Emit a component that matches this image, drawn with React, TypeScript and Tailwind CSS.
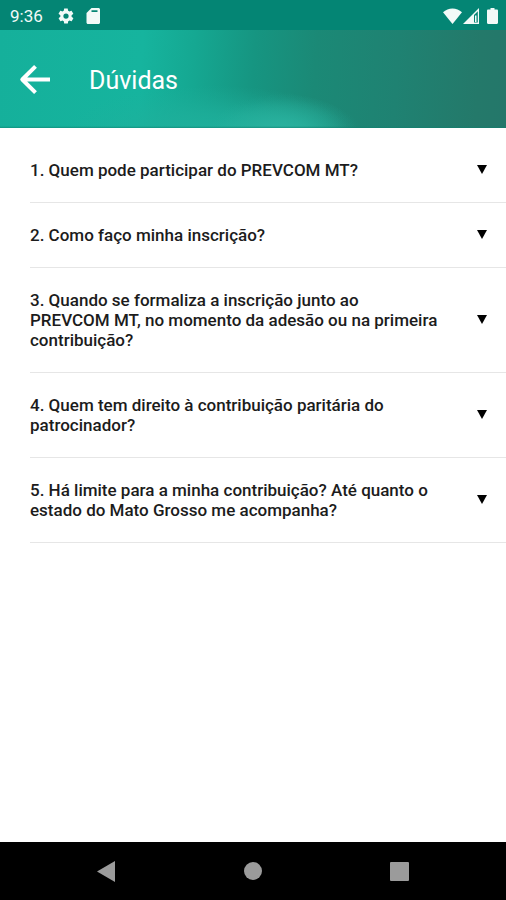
import { useState } from "react";

interface Question {
  id: number;
  title: string;
}

const questions: Question[] = [
  { id: 1, title: "Quem pode participar do PREVCOM MT?" },
  { id: 2, title: "Como faço minha inscrição?" },
  {
    id: 3,
    title:
      "Quando se formaliza a inscrição junto ao PREVCOM MT, no momento da adesão ou na primeira contribuição?",
  },
  {
    id: 4,
    title: "Quem tem direito à contribuição paritária do patrocinador?",
  },
  {
    id: 5,
    title:
      "Há limite para a minha contribuição? Até quanto o estado do Mato Grosso me acompanha?",
  },
];

function StatusBar() {
  return (
    <div className="flex h-[30px] items-center justify-between bg-[#048574] pl-[10px] pr-2 pt-[2px] text-[#f2faf8]">
      <div className="flex items-center">
        <span className="text-[17px] leading-5">9:36</span>
        <svg className="ml-[14px] size-[18px]" viewBox="0 0 24 24" fill="currentColor">
          <path
            fillRule="evenodd"
            d="M19.4 13c0-.3.1-.6.1-1s0-.7-.1-1l2.1-1.6c.2-.2.3-.4.1-.7l-2-3.4c-.1-.2-.4-.3-.6-.2l-2.5 1c-.5-.4-1.1-.7-1.7-1l-.4-2.6c0-.3-.2-.5-.5-.5h-4c-.2 0-.4.2-.5.5L9 5.1c-.6.2-1.1.6-1.7 1l-2.5-1c-.2-.1-.5 0-.6.2l-2 3.4c-.1.3-.1.5.1.7L4.500 11c0 .3-.1.7-.1 1s0 .7.1 1l-2.1 1.6c-.2.2-.3.4-.1.7l2 3.4c.1.2.4.3.6.2l2.500-1c.5.4 1.1.7 1.7 1l.4 2.600c0 .3.2.5.5.5h4c.2 0 .5-.2.5-.5l.4-2.600c.6-.3 1.2-.6 1.7-1l2.500 1c.2.1.5 0 .6-.2l2-3.400c.1-.2.1-.5-.1-.7L19.400 13zM12 15.500a3.500 3.500 0 1 1 0-7 3.500 3.500 0 0 1 0 7z"
          />
        </svg>
        <svg className="ml-[11px] h-4 w-[14px]" viewBox="0 0 14 16" fill="currentColor">
          <path
            fillRule="evenodd"
            d="M12.5 0H5.500L.5 5v9.500c0 .8.7 1.500 1.500 1.500h10.500c.8 0 1.500-.7 1.500-1.500v-13c0-.8-.7-1.500-1.500-1.500zM5.500 2.300h6v1.600h-6z"
          />
        </svg>
      </div>
      <div className="flex items-center">
        <svg className="h-4 w-[19px]" viewBox="0 0 19 16" fill="currentColor">
          <path d="M9.5 16 0 4.300C2.700 2 6 .5 9.500.5S16.300 2 19 4.300z" />
        </svg>
        <svg className="ml-px size-4" viewBox="0 0 16 16" fill="currentColor">
          <path fillRule="evenodd" d="M16 0v16H0zM11 7v7.500h3.800V3.200z" />
          <path d="M12 7.500h1.500V14H12z" />
        </svg>
        <svg className="ml-2 h-4 w-[11px]" viewBox="0 0 11 16" fill="currentColor">
          <path d="M3.500 0h4v1.600h2.300c.7 0 1.200.5 1.200 1.200v12c0 .7-.5 1.200-1.200 1.200H1.200C.5 16 0 15.500 0 14.800v-12c0-.7.5-1.200 1.200-1.200h2.300z" />
        </svg>
      </div>
    </div>
  );
}

function Header() {
  return (
    <header className="flex h-[98px] items-center bg-[linear-gradient(0deg,#0d7f6e99_0px,#0d7f6e00_2px),radial-gradient(ellipse_74px_40px_at_56%_106%,#2bb3a0_0%,#2bb3a0c0_35%,#2bb3a060_68%,#2bb3a018_88%,#2bb3a000_100%),radial-gradient(ellipse_150px_46px_at_42%_104%,#1fb09c_0%,#1fb09cb0_40%,#1fb09c40_75%,#1fb09c00_100%),linear-gradient(94deg,#15b09b_0%,#16b49e_28%,#15a892_38%,#169581_50%,#1b8976_62%,#1f8272_78%,#24796a_94%,#24776a_100%)] pl-[13px] pt-1 text-white">
      <button type="button" aria-label="Voltar" className="size-11">
        <svg
          className="size-11"
          viewBox="0 0 44 44"
          fill="none"
          stroke="currentColor"
          strokeWidth="4"
          strokeLinejoin="round"
        >
          <path d="M37 20.500H9.500M22.500 7.300 9.300 20.500l13.200 13.200" />
        </svg>
      </button>
      <h1 className="ml-8 text-[25px] leading-8">Dúvidas</h1>
    </header>
  );
}

function QuestionRow({ question }: { question: Question }) {
  const [selected, setSelected] = useState(false);

  return (
    <li className="border-b border-[#e6e6e6]">
      <button
        type="button"
        aria-pressed={selected}
        onClick={() => setSelected(!selected)}
        className="flex w-full items-center justify-between py-[22px] pr-[19px] text-left"
      >
        <span className="mr-[38px] flex-1 text-[17px] font-medium leading-5">
          {`${question.id}. ${question.title}`}
        </span>
        <svg className="size-[10px]" viewBox="0 0 10 10" fill="#000">
          <path d="M0 0h10L5 9z" />
        </svg>
      </button>
    </li>
  );
}

function NavigationBar() {
  return (
    <nav className="flex h-[58px] items-center bg-black px-[33px] text-[#9b9b9b]">
      <button type="button" aria-label="Voltar" className="flex flex-1 justify-center">
        <svg className="h-[21px] w-[18px]" viewBox="0 0 18 21" fill="currentColor">
          <path d="M18 0v21L0 10.500z" />
        </svg>
      </button>
      <button type="button" aria-label="Início" className="flex flex-1 justify-center">
        <span className="size-[18px] rounded-full bg-[#9b9b9b]" />
      </button>
      <button type="button" aria-label="Recentes" className="flex flex-1 justify-center">
        <span className="size-[19px] rounded-[1px] bg-[#9b9b9b]" />
      </button>
    </nav>
  );
}

export default function App() {
  return (
    <div className="flex min-h-screen flex-col bg-white font-[Roboto,sans-serif] text-[#1c1c1c]">
      <StatusBar />
      <Header />
      <main className="flex-1 pt-[10px]">
        <ul className="pl-[30px]">
          {questions.map((question) => (
            <QuestionRow key={question.id} question={question} />
          ))}
        </ul>
      </main>
      <NavigationBar />
    </div>
  );
}
